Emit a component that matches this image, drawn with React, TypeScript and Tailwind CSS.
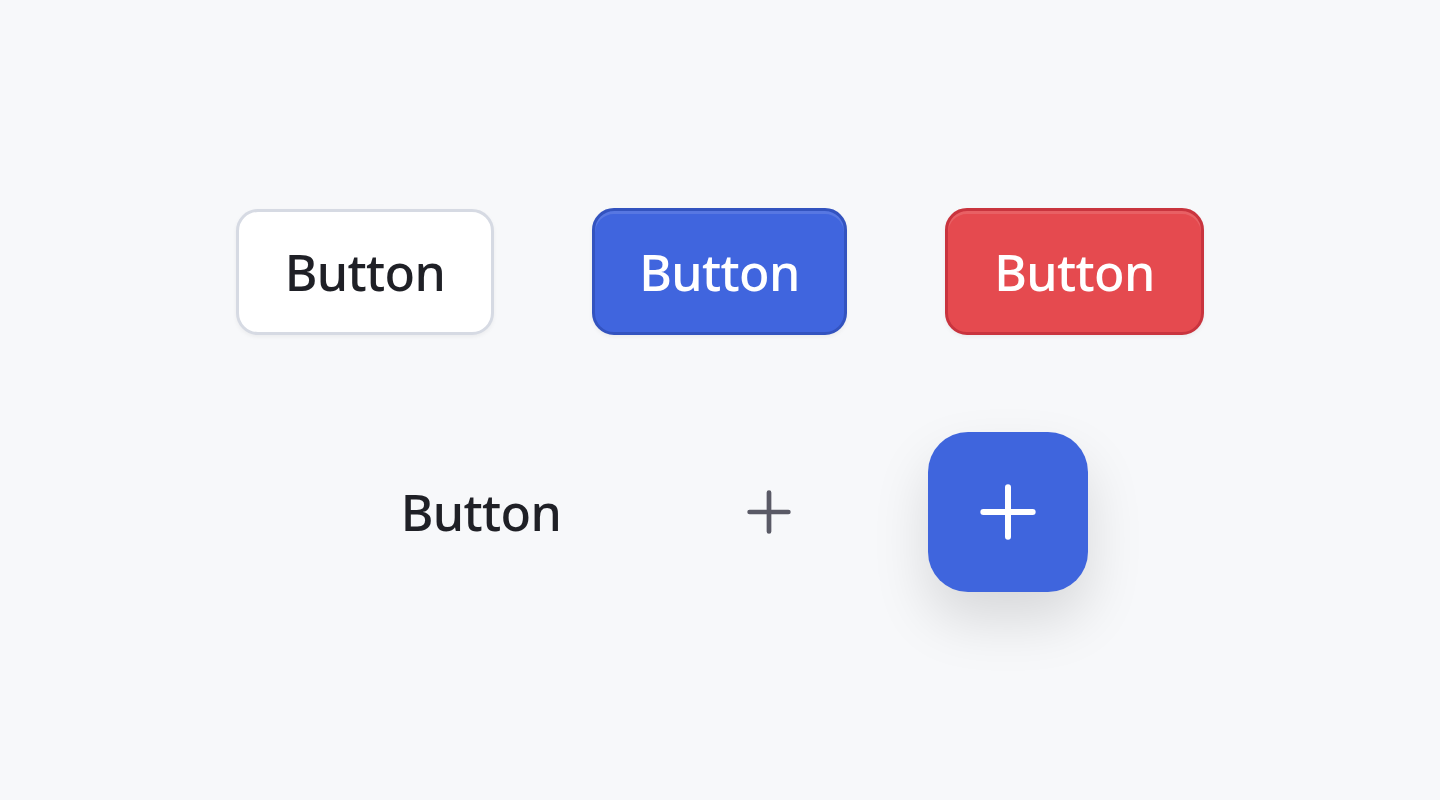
import React from "react";

function Plus({ size, color, stroke }: { size: number; color: string; stroke: number }) {
  return (
    <svg width={size} height={size} viewBox="0 0 42 42" fill="none">
      <path d="M21 2.5v37M2.5 21h37" stroke={color} strokeWidth={stroke} strokeLinecap="round" />
    </svg>
  );
}

function Label() {
  return (
    <span className="inline-block text-[50px] font-medium leading-none tracking-[-0.012em]">
      Button
    </span>
  );
}

export default function App() {
  const font: React.CSSProperties = { fontFamily: '"Noto Sans", "Open Sans", sans-serif' };
  return (
    <div className="w-full h-[800px] bg-[#f7f8fa] flex flex-col items-center justify-center gap-[97px]" style={font}>
      <div className="flex items-center gap-[98px]">
        <button className="w-[258px] h-[126px] rounded-[22px] bg-white border-[3px] border-[#d6dae3] shadow-[0_2px_4px_rgba(0,0,0,0.05)] text-[#1f2026] flex items-center justify-center">
          <Label />
        </button>
        <button className="w-[255px] h-[127px] rounded-[22px] bg-[#4065de] border-[3px] border-[#3353bf] shadow-[inset_0_3px_0_rgba(255,255,255,0.12),0_2px_4px_rgba(0,0,0,0.05)] text-white flex items-center justify-center">
          <Label />
        </button>
        <button className="w-[259px] h-[127px] rounded-[22px] bg-[#e54a4f] border-[3px] border-[#c9343e] shadow-[inset_0_3px_0_rgba(255,255,255,0.12),0_2px_4px_rgba(0,0,0,0.05)] text-white flex items-center justify-center">
          <Label />
        </button>
      </div>
      <div className="flex items-center gap-[99px]">
        <button className="w-[258px] h-[126px] text-[#1f2026] flex items-center justify-center">
          <Label />
        </button>
        <button className="w-[120px] h-[120px] flex items-center justify-center">
          <Plus size={44} color="#5a5a66" stroke={4.5} />
        </button>
        <button className="w-[160px] h-[160px] rounded-[40px] bg-[#3f65dd] shadow-[0_28px_56px_rgba(0,0,0,0.13)] flex items-center justify-center">
          <Plus size={56} color="#ffffff" stroke={4.5} />
        </button>
      </div>
    </div>
  );
}
